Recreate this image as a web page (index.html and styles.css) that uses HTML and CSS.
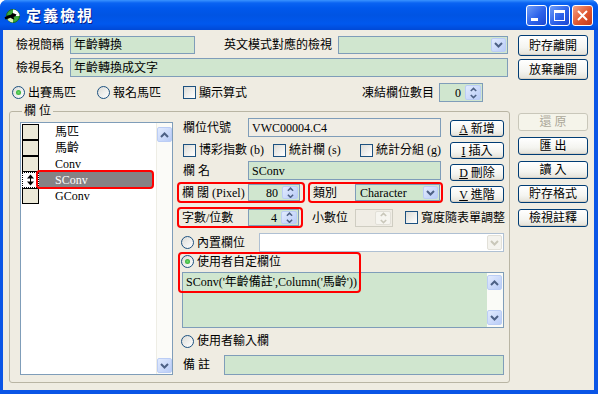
FILE: index.html
```html
<!DOCTYPE html>
<html lang="zh-Hant">
<head>
    <meta charset="UTF-8">
    <meta name="viewport" content="width=device-width, initial-scale=1.0">
    <title>定義檢視</title>
    <link rel="stylesheet" href="styles.css">
</head>
<body>
<svg class="defs" width="0" height="0">
    <symbol id="dn" viewBox="0 0 9 6"><path d="M1 1l3.5 3.5L8 1" fill="none" stroke="currentColor" stroke-width="2"/></symbol>
    <symbol id="up" viewBox="0 0 9 6"><path d="M1 5l3.5-3.5L8 5" fill="none" stroke="currentColor" stroke-width="2"/></symbol>
</svg>
<div class="window">
    <div class="titlebar">
        <svg class="app-icon" width="16" height="16" viewBox="0 0 16 16">
            <circle cx="9" cy="8" r="6.5" fill="#3DAA3D" stroke="#1C6B1C"/>
            <path d="M9 1.5A6.5 6.5 0 0 1 15.5 8H9z" fill="#fff"/>
            <path d="M9 14.5A6.5 6.5 0 0 1 2.5 8H9z" fill="#DDF2B8"/>
            <path d="M0.5 9.5L3.5 7.5 7 6.8 8.5 5 10 5.5 12.5 6.5 11.5 8.3 9.5 9 10.5 11.5 8.5 11 6.5 9.8 4 10.8 1.5 11.5z" fill="#000"/>
        </svg>
        <span class="caption">定義檢視</span>
        <div class="caption-btns">
            <span class="cap-btn"><svg width="19" height="19" viewBox="0 0 19 19"><rect x="4" y="12" width="7" height="3" fill="#fff"/></svg></span>
            <span class="cap-btn"><svg width="19" height="19" viewBox="0 0 19 19"><rect x="4.5" y="4.5" width="10" height="10" fill="none" stroke="#fff"/><rect x="4" y="4" width="11" height="3" fill="#fff"/></svg></span>
            <span class="cap-btn close"><svg width="19" height="19" viewBox="0 0 19 19"><path d="M5 5l9 9M14 5l-9 9" stroke="#fff" stroke-width="2"/></svg></span>
        </div>
    </div>

    <div class="client">
        <div class="main">
            <div class="row r1">
                <span class="lbl w-lbl">檢視簡稱</span>
                <div class="edit green short">年齡轉換</div>
                <span class="lbl eng-lbl">英文模式對應的檢視</span>
                <div class="combo green eng-combo">
                    <span class="combo-text"></span>
                    <span class="drop"><svg width="9" height="6"><use href="#dn"/></svg></span>
                </div>
            </div>
            <div class="row r2">
                <span class="lbl w-lbl">檢視長名</span>
                <div class="edit green long">年齡轉換成文字</div>
            </div>
            <div class="row r3">
                <label class="opt src1"><span class="radio on"></span>出賽馬匹</label>
                <label class="opt src2"><span class="radio"></span>報名馬匹</label>
                <label class="opt"><span class="check"></span>顯示算式</label>
                <span class="lbl freeze-lbl">凍結欄位數目</span>
                <div class="spin green freeze">
                    <span class="spin-val">0</span>
                    <span class="spin-btn">
                        <svg width="7" height="5"><use href="#up"/></svg>
                        <svg width="7" height="5"><use href="#dn"/></svg>
                    </span>
                </div>
            </div>

            <fieldset class="group">
                <legend>欄 位</legend>
                <div class="group-body">
                    <!-- 欄位清單 -->
                    <div class="list">
                        <div class="list-rows">
                            <div class="lrow"><span class="lhead"></span><span class="ltext">馬匹</span></div>
                            <div class="lrow"><span class="lhead"></span><span class="ltext">馬齡</span></div>
                            <div class="lrow"><span class="lhead"></span><span class="ltext">Conv</span></div>
                            <div class="lrow"><span class="lhead cur"><svg width="9" height="12" viewBox="0 0 9 12"><path d="M4.5 0.5L1 4.5h7zM4.5 11.5L1 7.5h7z" fill="#000"/><rect x="4" y="4" width="1" height="4" fill="#000"/></svg></span><span class="ltext sel">SConv</span></div>
                            <div class="lrow"><span class="lhead"></span><span class="ltext">GConv</span></div>
                        </div>
                        <div class="vscroll">
                            <span class="sbtn"><svg width="9" height="6"><use href="#up"/></svg></span>
                            <span class="sbtn"><svg width="9" height="6"><use href="#dn"/></svg></span>
                        </div>
                        <span class="mark list-mark"></span>
                    </div>

                    <div class="fields-area">
                        <div class="top">
                            <div class="fields">
                                <div class="row fa">
                                    <span class="lbl f-lbl">欄位代號</span>
                                    <div class="edit ro f-edit">VWC00004.C4</div>
                                </div>
                                <div class="row fb">
                                    <label class="opt cb1"><span class="check"></span>博彩指數 (b)</label>
                                    <label class="opt cb2"><span class="check"></span>統計欄 (s)</label>
                                    <label class="opt"><span class="check"></span>統計分組 (g)</label>
                                </div>
                                <div class="row fc">
                                    <span class="lbl f-lbl">欄 名</span>
                                    <div class="edit green f-edit">SConv</div>
                                </div>
                                <div class="row fd">
                                    <div class="redbox">
                                        <span class="lbl r-lbl">欄 闊 (Pixel)</span>
                                        <div class="spin green w52">
                                            <span class="spin-val">80</span>
                                            <span class="spin-btn">
                                                <svg width="7" height="5"><use href="#up"/></svg>
                                                <svg width="7" height="5"><use href="#dn"/></svg>
                                            </span>
                                        </div>
                                    </div>
                                    <div class="redbox kind">
                                        <span class="lbl k-lbl">類別</span>
                                        <div class="combo green k-combo">
                                            <span class="combo-text">Character</span>
                                            <span class="drop"><svg width="9" height="6"><use href="#dn"/></svg></span>
                                        </div>
                                    </div>
                                </div>
                            </div>
                            <div class="mid-btns">
                                <span class="btn"><u>A</u>&nbsp;新增</span>
                                <span class="btn"><u>I</u>&nbsp;插入</span>
                                <span class="btn"><u>D</u>&nbsp;刪除</span>
                                <span class="btn"><u>V</u>&nbsp;進階</span>
                            </div>
                        </div>

                        <div class="row fe">
                            <div class="redbox len">
                                <span class="lbl r-lbl">字數/位數</span>
                                <div class="spin green w51">
                                    <span class="spin-val">4</span>
                                    <span class="spin-btn">
                                        <svg width="7" height="5"><use href="#up"/></svg>
                                        <svg width="7" height="5"><use href="#dn"/></svg>
                                    </span>
                                </div>
                            </div>
                            <span class="lbl dec-lbl">小數位</span>
                            <div class="spin off dec">
                                <span class="spin-val"></span>
                                <span class="spin-btn">
                                    <svg width="7" height="5"><use href="#up"/></svg>
                                    <svg width="7" height="5"><use href="#dn"/></svg>
                                </span>
                            </div>
                            <label class="opt fit"><span class="check"></span>寬度隨表單調整</label>
                        </div>

                        <div class="row ff">
                            <label class="opt builtin"><span class="radio"></span>內置欄位</label>
                            <div class="combo off b-combo">
                                <span class="combo-text"></span>
                                <span class="drop"><svg width="9" height="6"><use href="#dn"/></svg></span>
                            </div>
                        </div>

                        <div class="custom">
                            <div class="row fg">
                                <label class="opt"><span class="radio on"></span>使用者自定欄位</label>
                            </div>
                            <div class="memo green">
                                <div class="memo-text">SConv('年齡備註',Column('馬齡'))</div>
                                <div class="vscroll memo-scroll">
                                    <span class="sbtn"><svg width="9" height="6"><use href="#up"/></svg></span>
                                    <span class="sbtn"><svg width="9" height="6"><use href="#dn"/></svg></span>
                                </div>
                            </div>
                            <span class="mark custom-mark"></span>
                        </div>

                        <div class="row fh">
                            <label class="opt"><span class="radio"></span>使用者輸入欄</label>
                        </div>
                        <div class="row fi">
                            <span class="lbl n-lbl">備 註</span>
                            <div class="edit green n-edit"></div>
                        </div>
                    </div>
                </div>
            </fieldset>
        </div>

        <div class="side">
            <span class="btn big">貯存離開</span>
            <span class="btn big">放棄離開</span>
            <span class="btn sm first disabled">還 原</span>
            <span class="btn sm">匯 出</span>
            <span class="btn sm">讀 入</span>
            <span class="btn sm">貯存格式</span>
            <span class="btn sm">檢視註釋</span>
        </div>
    </div>
</div>
</body>
</html>
```

FILE: styles.css
```css
* {
    box-sizing: border-box;
}

body {
    margin: 0;
    font: 12px/16px "Liberation Serif", "Noto Sans CJK TC", serif;
    color: #000;
    background: #fff;
}

.defs {
    display: none;
}

/* 視窗外框 */
.window {
    width: 598px;
    height: 394px;
    display: flex;
    flex-direction: column;
    background: #0A55E6;
    border-radius: 7px 7px 0 0;
    overflow: hidden;
}

.titlebar {
    height: 30px;
    flex: none;
    display: flex;
    align-items: center;
    padding: 0 5px 0 4px;
    background: linear-gradient(#3A93FF 0, #0A63F2 3px, #0058EC 8px, #0054E3 50%, #0058EE 80%, #0049D6 100%);
}

.app-icon {
    margin-top: 1px;
}

.caption {
    margin-left: 6px;
    color: #fff;
    font: bold 15px/18px "Noto Sans CJK TC", sans-serif;
    letter-spacing: 2px;
    text-shadow: 1px 1px 0 #0A1F8C;
}

.caption-btns {
    margin-left: auto;
    display: flex;
    gap: 2px;
}

.cap-btn {
    width: 21px;
    height: 21px;
    border: 1px solid #fff;
    border-radius: 3px;
    display: flex;
    align-items: center;
    justify-content: center;
    background: linear-gradient(135deg, #6E9DF8, #2C62EA 55%, #1B47D2);
}

.cap-btn.close {
    background: linear-gradient(135deg, #F2A287, #E0562F 55%, #C33A1C);
}

.client {
    flex: 1;
    margin: 0 4px 4px 3px;
    background: #EFECE2;
    display: flex;
}

/* 主區 */
.main {
    width: 501px;
    margin-left: 6px;
    padding-top: 6px;
    display: flex;
    flex-direction: column;
}

.row {
    display: flex;
    align-items: center;
    flex: none;
}

.lbl {
    flex: none;
    white-space: nowrap;
}

.r1 {
    height: 18px;
}

.r2 {
    height: 19px;
    margin-top: 4px;
}

.r3 {
    height: 19px;
    margin-top: 6px;
}

.w-lbl {
    margin-left: 7px;
    width: 54px;
}

.eng-lbl {
    margin-left: 29px;
    width: 114px;
}

.short {
    width: 125px;
}

.long {
    width: 438px;
}

.eng-combo {
    width: 170px;
}

.freeze-lbl {
    margin-left: auto;
}

.freeze {
    width: 44px;
    margin: 0 27px 0 5px;
}

/* 輸入框 */
.edit {
    height: 100%;
    flex: none;
    border: 1px solid #7F9DB9;
    display: flex;
    align-items: center;
    padding-left: 3px;
    white-space: nowrap;
    overflow: hidden;
}

.green {
    background: #D0E6CF;
}

.ro {
    background: #F0EDE5;
}

.combo {
    height: 100%;
    flex: none;
    border: 1px solid #7F9DB9;
    display: flex;
    align-items: center;
    padding: 1px;
}

.combo-text {
    flex: 1;
    padding-left: 3px;
    white-space: nowrap;
}

.drop, .sbtn {
    width: 15px;
    height: 100%;
    flex: none;
    display: flex;
    align-items: center;
    justify-content: center;
    border: 1px solid #BBCDF5;
    border-radius: 2px;
    background: linear-gradient(135deg, #E2EBFE, #B9CCF7);
    color: #4D6185;
}

.sbtn {
    height: 15px;
}

.combo.off {
    background: #fff;
    border-color: #AFC0D3;
}

.combo.off .drop {
    background: #F4F3EE;
    border-color: #E2E0D8;
    color: #C9C7BA;
}

.spin {
    height: 100%;
    flex: none;
    display: flex;
    border: 1px solid #7F9DB9;
    padding: 1px;
}

.spin-val {
    flex: 1;
    display: flex;
    align-items: center;
    justify-content: flex-end;
    padding-right: 4px;
}

.spin-btn {
    width: 16px;
    flex: none;
    display: flex;
    flex-direction: column;
    align-items: center;
    justify-content: center;
    gap: 2px;
    border: 1px solid #BBCDF5;
    border-radius: 2px;
    background: linear-gradient(135deg, #E2EBFE, #B9CCF7);
    color: #4D6185;
}

.spin.off {
    background: #F0EDE5;
    border-color: #CFCDC2;
}

.spin.off .spin-btn {
    background: #F6F5F0;
    border-color: #E2E0D8;
    color: #C9C7BA;
}

/* 選項 */
.opt {
    display: flex;
    align-items: center;
    gap: 3px;
    white-space: nowrap;
    flex: none;
}

.radio {
    width: 13px;
    height: 13px;
    border-radius: 50%;
    border: 1px solid #1C5180;
    background: linear-gradient(135deg, #DCDCD7, #fff);
    display: flex;
    align-items: center;
    justify-content: center;
}

.radio.on::after {
    content: "";
    width: 5px;
    height: 5px;
    border-radius: 50%;
    background: radial-gradient(#6EDB6E, #21A121);
}

.check {
    width: 13px;
    height: 13px;
    border: 1px solid #1C5180;
    background: linear-gradient(135deg, #DCDCD7, #fff);
}

.src1 {
    margin-left: 3px;
    width: 85px;
}

.src2 {
    width: 86px;
}

/* 按鈕 */
.btn {
    display: flex;
    align-items: center;
    justify-content: center;
    border: 1px solid #003C74;
    border-radius: 3px;
    background: linear-gradient(#FFFFFF 0%, #F4F4F0 60%, #E3E1D8 100%);
    box-shadow: inset 0 -1px 0 #D6D0C5;
    white-space: nowrap;
}

.btn.disabled {
    border-color: #C9C7BA;
    color: #ACA899;
    background: #F5F4EA;
    box-shadow: none;
}

.side {
    margin-left: 8px;
    width: 70px;
    padding-top: 5px;
    display: flex;
    flex-direction: column;
}

.side .big {
    height: 21px;
}

.side .big + .big {
    margin-top: 3px;
}

.side .sm {
    height: 18px;
    margin-top: 6px;
}

.side .first {
    margin-top: 33px;
}

/* 欄位群組 */
.group {
    margin: 2px 0 0 0;
    padding: 0 0 7px 0;
    border: 1px solid #B9B5A4;
    border-radius: 3px;
    min-width: 0;
}

.group legend {
    margin-left: 12px;
    padding: 0 2px;
    line-height: 14px;
}

.group-body {
    display: flex;
}

.list {
    position: relative;
    margin: 4px 0 0 10px;
    width: 153px;
    height: 253px;
    flex: none;
    border: 1px solid #7F9DB9;
    background: #fff;
    display: flex;
}

.list-rows {
    flex: 1;
    padding: 1px 4px 0 1px;
}

.lrow {
    display: flex;
    height: 16px;
}

.lhead {
    width: 17px;
    flex: none;
    border: 1px solid #000;
    background: #ECE9D8;
    display: flex;
    align-items: center;
    justify-content: center;
}

.lhead.cur {
    border-style: dotted;
    background: #fff;
}

.ltext {
    flex: 1;
    padding-left: 16px;
    line-height: 16px;
}

.ltext.sel {
    background: #858285;
    color: #fff;
}

.vscroll {
    width: 16px;
    flex: none;
    display: flex;
    flex-direction: column;
    justify-content: space-between;
    padding: 4px 1px 1px 0;
    border-left: 1px solid #EEEDE5;
    background: #FBFBF8;
}

.mark {
    position: absolute;
    border: 2px solid #F00;
    border-radius: 4px;
}

.list-mark {
    left: 15px;
    top: 47px;
    width: 118px;
    height: 19px;
}

.fields-area {
    margin-left: 4px;
    width: 328px;
    display: flex;
    flex-direction: column;
}

.top {
    display: flex;
}

.fields {
    width: 266px;
    display: flex;
    flex-direction: column;
}

.mid-btns {
    margin-left: 7px;
    width: 54px;
    padding-top: 2px;
    display: flex;
    flex-direction: column;
    gap: 5px;
}

.mid-btns .btn {
    height: 17px;
}

.fa {
    height: 19px;
    padding-left: 6px;
}

.fb {
    height: 18px;
    margin-top: 4px;
    padding-left: 6px;
}

.fc {
    height: 19px;
    margin-top: 2px;
    padding-left: 6px;
}

.fd {
    height: 21px;
    margin-top: 2px;
}

.f-lbl {
    width: 65px;
}

.f-edit {
    width: 193px;
}

.cb1 {
    width: 90px;
}

.cb2 {
    width: 87px;
}

.redbox {
    height: 100%;
    display: flex;
    align-items: center;
    border: 2px solid #F00;
    border-radius: 4px;
    padding: 0 3px;
}

.r-lbl {
    width: 66px;
}

.w52 {
    width: 52px;
}

.w51 {
    width: 51px;
}

.kind {
    margin-left: 3px;
    padding-right: 1px;
}

.k-lbl {
    width: 42px;
}

.k-combo {
    width: 85px;
}

.fe {
    height: 21px;
    margin-top: 4px;
}

.len {
    padding-right: 2px;
}

.dec-lbl {
    margin-left: 9px;
    width: 43px;
}

.dec {
    width: 38px;
    height: 18px;
}

.fit {
    margin-left: 12px;
}

.ff {
    height: 19px;
    margin-top: 5px;
    padding-left: 4px;
}

.builtin {
    width: 78px;
}

.b-combo {
    width: 245px;
}

.custom {
    position: relative;
}

.fg {
    height: 19px;
    padding-left: 4px;
}

.memo {
    margin: 1px 0 0 5px;
    width: 322px;
    height: 56px;
    border: 1px solid #7F9DB9;
    display: flex;
}

.memo-text {
    flex: 1;
    padding: 1px 0 0 3px;
    white-space: nowrap;
}

.memo-scroll {
    padding: 2px 2px 2px 0;
    border-left: none;
    background: #FAFBF7;
}

.custom-mark {
    left: 1px;
    top: 0;
    width: 183px;
    height: 41px;
}

.fh {
    height: 18px;
    margin-top: 4px;
    padding-left: 4px;
}

.fi {
    height: 20px;
    margin-top: 5px;
    padding-left: 6px;
}

.n-lbl {
    width: 41px;
}

.n-edit {
    width: 280px;
}
```
